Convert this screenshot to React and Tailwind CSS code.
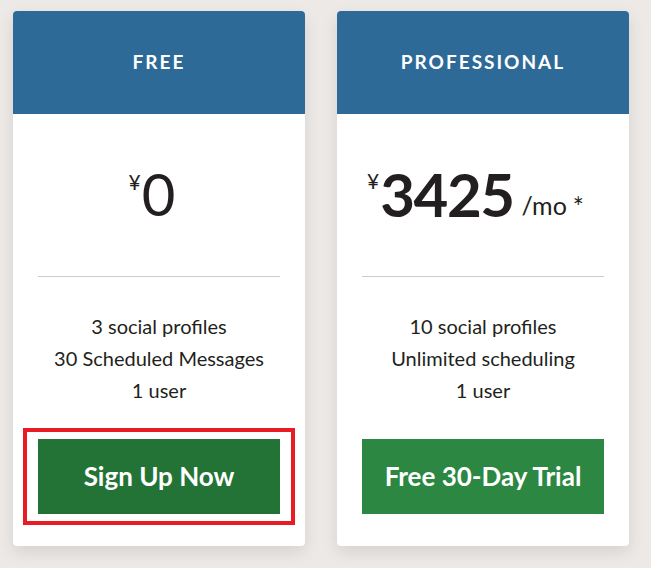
export default function App() {
  const font = { fontFamily: 'Lato, "Noto Sans", sans-serif' };
  return (
    <div className="w-[651px] h-[568px] bg-[#ede9e6] overflow-hidden" style={font}>
      <div className="flex gap-[32px] pl-[13px] pt-[11px]">
        {/* Card 1 */}
        <div className="w-[292px] h-[535px] bg-white rounded-[4px] shadow-[0_6px_16px_rgba(0,0,0,0.10)] flex flex-col overflow-hidden">
          <div className="h-[103px] bg-[#2e6a98] flex items-center justify-center">
            <span className="text-white font-bold text-[19px] tracking-[2px]">FREE</span>
          </div>
          <div className="h-[162px] flex items-center justify-center pb-[2px] pr-[14px]">
            <div className="flex items-start text-[#231f20]">
              <span className="text-[21px] leading-none mt-[6px] mr-[1px]">¥</span>
              <span className="text-[58px] leading-none font-normal">0</span>
            </div>
          </div>
          <div className="mx-[25px] h-[1px] bg-[#cccccc]" />
          <div className="pt-[33px] flex flex-col items-center text-[20px] leading-[32px] text-[#231f20]">
            <span>3 social profiles</span>
            <span>30 Scheduled Messages</span>
            <span>1 user</span>
          </div>
          <div className="mt-[22px] mx-[10px] border-[4px] border-[#e81c24] px-[11px] pt-[7px] pb-[7px]">
            <div className="h-[75px] bg-[#237336] flex items-center justify-center text-white font-bold text-[26px]">
              Sign Up Now
            </div>
          </div>
        </div>
        {/* Card 2 */}
        <div className="w-[292px] h-[535px] bg-white rounded-[4px] shadow-[0_6px_16px_rgba(0,0,0,0.10)] flex flex-col overflow-hidden">
          <div className="h-[103px] bg-[#2e6a98] flex items-center justify-center">
            <span className="text-white font-bold text-[19px] tracking-[2px]">PROFESSIONAL</span>
          </div>
          <div className="h-[162px] flex items-center justify-center pb-[2px] pr-[15px]">
            <div className="flex items-start text-[#231f20]">
              <span className="text-[21px] leading-none mt-[6px] mr-[1px]">¥</span>
              <span className="text-[60px] leading-none font-bold tracking-[-1.5px]">3425</span>
              <span className="text-[25px] leading-none mt-[29px] ml-[8px]">/mo</span>
              <span className="text-[26px] leading-none mt-[30px] ml-[6px]">*</span>
            </div>
          </div>
          <div className="mx-[25px] h-[1px] bg-[#cccccc]" />
          <div className="pt-[33px] flex flex-col items-center text-[20px] leading-[32px] text-[#231f20]">
            <span>10 social profiles</span>
            <span>Unlimited scheduling</span>
            <span>1 user</span>
          </div>
          <div className="mt-[33px] mx-[25px]">
            <div className="h-[75px] bg-[#2b8741] flex items-center justify-center text-white font-bold text-[26px]">
              Free 30-Day Trial
            </div>
          </div>
        </div>
      </div>
    </div>
  );
}
